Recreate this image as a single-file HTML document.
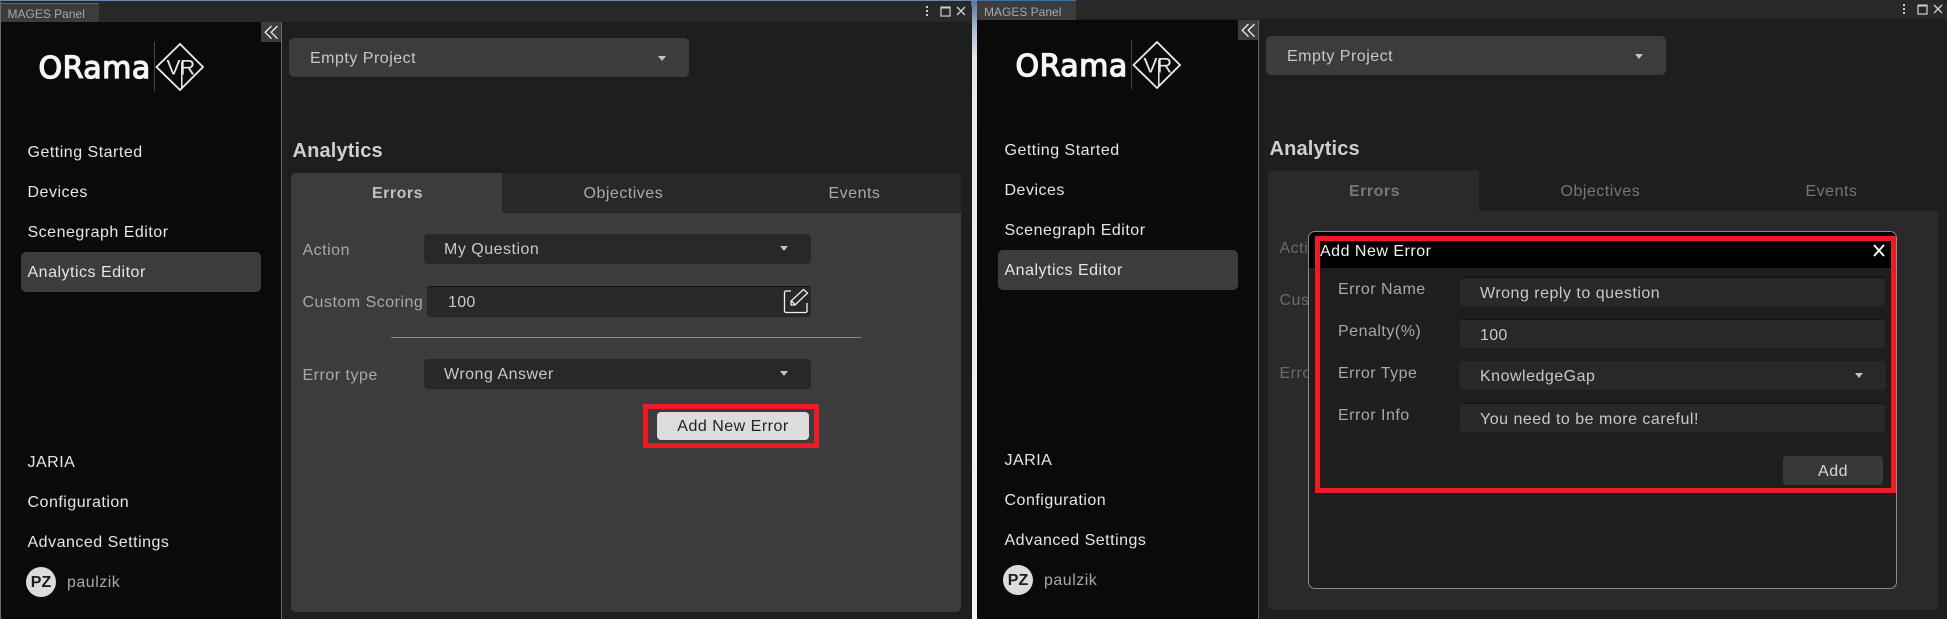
<!DOCTYPE html>
<html><head><meta charset="utf-8"><style>
html,body{margin:0;padding:0;background:#1e1e1e}
body{width:1947px;height:619px;overflow:hidden;position:relative;font-family:"Liberation Sans",sans-serif;font-size:16px;letter-spacing:.5px}
div,span{position:absolute;white-space:nowrap;box-sizing:border-box}
svg{position:absolute;overflow:visible}
.t{height:20px;line-height:20px;margin-top:1px}
.panel{top:0;height:619px;overflow:hidden;background:#1e1e1e}
.nav{color:#e6e6e6;left:27px;letter-spacing:.5px}
.lab{color:#a8a8a8}
.val{color:#c8c8c8}
.dd{background:#282828;border-radius:4px}
.inp{background:#282828;border-top:1px solid #111;border-radius:3px}
.arr{width:0;height:0;border-left:4px solid transparent;border-right:4px solid transparent;border-top:5px solid #c4c4c4}
.h{color:#cfcfcf;font-weight:700;font-size:20px;letter-spacing:.15px}
.tab{height:18px;line-height:18px;color:#a8a8a8;font-size:12px;letter-spacing:0}
.pz{width:30px;height:30px;border-radius:50%;background:#dcdcdc;color:#1c1c1c;font-weight:700;text-align:center;line-height:32px;letter-spacing:0}
</style></head><body>
<div style="left:971px;top:0;width:6px;height:619px;background:linear-gradient(#5a7299 0,#aebdd2 30px,#e8e8e8 60px,#f4f4f4 100%)"></div>
<div style="left:0;top:0;width:977px;height:1px;background:#6d86ac"></div>
<div style="left:0;top:0;width:1px;height:619px;background:#6a6a6a"></div>

<!-- PANEL 1 -->
<div class="panel" style="left:1px;width:971px;top:1px;height:618px;border-radius:0 7px 0 4px">
 <div style="left:0;top:-1px;width:971px;height:22px;background:#282828"></div>
 <div style="left:0;top:2px;width:98px;height:19px;background:#3c3c3c;border-top:1px solid #3a70b0"></div>
 <div class="tab" style="left:6.500px;top:4px">MAGES Panel</div>
 <svg style="left:-1px;top:-1px" width="972" height="22"><g fill="#d0d0d0"><rect x="926" y="6" width="2" height="2"/><rect x="926" y="10" width="2" height="2"/><rect x="926" y="14" width="2" height="2"/></g><rect x="941" y="7.500" width="9" height="8.500" fill="none" stroke="#d0d0d0" stroke-width="1.200"/><rect x="940.500" y="6.500" width="10" height="2" fill="#d0d0d0"/><path d="M957 7l8 8M965 7l-8 8" stroke="#d0d0d0" stroke-width="1.400" fill="none"/></svg>

 <div style="left:0;top:21px;width:280px;height:597px;background:#0a0a0a"></div>
 <div style="left:280px;top:21px;width:1px;height:597px;background:#6a6a6a"></div>
 <div style="left:260px;top:21px;width:20px;height:20px;background:#3c3c3c"></div>
 <svg style="left:-1px;top:-1px" width="300" height="100"><path d="M271.500 26l-6.300 6.300 6.300 6.400M277.500 26l-6.300 6.300 6.300 6.400" fill="none" stroke="#f0f0f0" stroke-width="1.300"/>
  <text x="38.500" y="78" font-family="DejaVu Sans" font-size="30" letter-spacing=".5" fill="#f6f6f6" stroke="#f6f6f6" stroke-width="1.300">ORama</text>
  <rect x="154" y="42" width="1" height="49" fill="#444"/>
  <path d="M180 44L203 67 180 90 156.500 67z" fill="none" stroke="#eee" stroke-width="1.800"/>
  <text x="166.500" y="74.500" font-family="Liberation Sans" font-size="21" fill="#e8e8e8">V</text>
  <text x="180" y="74.500" font-family="Liberation Sans" font-size="21" fill="#e8e8e8">R</text>
  <path d="M181.800 62v27" stroke="#e8e8e8" stroke-width="1.500"/>
 </svg>

 <div class="t nav" style="left:26.500px;top:141px">Getting Started</div>
 <div class="t nav" style="left:26.500px;top:181px">Devices</div>
 <div class="t nav" style="left:26.500px;top:221px">Scenegraph Editor</div>
 <div style="left:20px;top:251px;width:240px;height:40px;background:#3c3c3c;border-radius:5px"></div>
 <div class="t nav" style="left:26.500px;top:261px">Analytics Editor</div>
 <div class="t nav" style="left:26.500px;top:451px">JARIA</div>
 <div class="t nav" style="left:26.500px;top:491px">Configuration</div>
 <div class="t nav" style="left:26.500px;top:531px">Advanced Settings</div>
 <div class="pz" style="left:25px;top:566px">PZ</div>
 <div class="t lab" style="left:66px;top:571px">paulzik</div>

 <div style="left:288px;top:37px;width:400px;height:39px;background:#3c3c3c;border-radius:5px"></div>
 <div class="t val" style="left:309px;top:47px">Empty Project</div>
 <div class="arr" style="left:657px;top:55px"></div>

 <div class="t h" style="left:291.500px;top:139px">Analytics</div>

 <div style="left:290px;top:172px;width:670px;height:439px;background:#3c3c3c;border-radius:5px"></div>
 <div style="left:501px;top:172px;width:459px;height:40px;background:#282828;border-radius:0 5px 0 0"></div>
 <div class="t" style="left:371px;top:182px;color:#c0c0c0;font-weight:700">Errors</div>
 <div class="t lab" style="left:582.500px;top:182px">Objectives</div>
 <div class="t lab" style="left:827.500px;top:182px">Events</div>

 <div class="t lab" style="left:301.500px;top:239px">Action</div>
 <div class="dd" style="left:422.500px;top:233px;width:387.500px;height:30px"></div>
 <div class="t val" style="left:443px;top:238px">My Question</div>
 <div class="arr" style="left:779px;top:245px"></div>

 <div class="t lab" style="left:301.500px;top:291px">Custom Scoring</div>
 <div class="inp" style="left:426px;top:285px;width:384px;height:31px"></div>
 <div class="t val" style="left:447px;top:291px;letter-spacing:.3px">100</div>
 <svg style="left:-1px;top:-1px" width="900" height="330"><path d="M791 291h-5a1.500 1.500 0 0 0-1.500 1.500V311a1.500 1.500 0 0 0 1.500 1.500h19.500a1.500 1.500 0 0 0 1.500-1.500v-8" fill="none" stroke="#f0f0f0" stroke-width="1.300"/><path d="M791 305v-4L803.500 289.500 807.500 293 795 305zM791.500 301l3.500 3.500" fill="none" stroke="#f0f0f0" stroke-width="1.300"/></svg>

 <div style="left:390px;top:336px;width:470px;height:1px;background:#8a8a8a"></div>

 <div class="t lab" style="left:301.500px;top:364px">Error type</div>
 <div class="dd" style="left:422.500px;top:358px;width:387.500px;height:30px"></div>
 <div class="t val" style="left:443px;top:363px">Wrong Answer</div>
 <div class="arr" style="left:779px;top:370px"></div>

 <div style="left:642px;top:403px;width:176px;height:44px;border:5px solid #ed1c24"></div>
 <div style="left:656px;top:411px;width:152px;height:28px;background:#dcdcdc;border-radius:4px"></div>
 <div class="t" style="left:656px;width:152px;top:415px;text-align:center;color:#222">Add New Error</div>
</div>

<!-- PANEL 2 -->
<div class="panel" style="left:977px;width:970px;height:619px;border-radius:0 5px 0 4px">
 <div style="left:0;top:0;width:970px;height:19px;background:#282828"></div>
 <div style="left:0;top:0;width:99px;height:20px;background:#3c3c3c;border-top:1px solid #3a70b0"></div>
 <div class="tab" style="left:7px;top:3px">MAGES Panel</div>
 <svg style="left:0;top:0" width="970" height="22"><g fill="#d0d0d0"><rect x="926" y="4" width="2" height="2"/><rect x="926" y="8" width="2" height="2"/><rect x="926" y="12" width="2" height="2"/></g><rect x="941" y="5.500" width="9" height="8.500" fill="none" stroke="#d0d0d0" stroke-width="1.200"/><rect x="940.500" y="4.500" width="10" height="2" fill="#d0d0d0"/><path d="M957 5l8 8M965 5l-8 8" stroke="#d0d0d0" stroke-width="1.400" fill="none"/></svg>

 <div style="left:0;top:20px;width:281px;height:599px;background:#0a0a0a"></div>
 <div style="left:281px;top:20px;width:1px;height:599px;background:#6a6a6a"></div>
 <div style="left:261px;top:20px;width:20px;height:20px;background:#3c3c3c"></div>
 <svg style="left:0;top:-2px" width="300" height="100"><path d="M271.500 26l-6.300 6.300 6.300 6.400M277.500 26l-6.300 6.300 6.300 6.400" fill="none" stroke="#f0f0f0" stroke-width="1.300"/>
  <text x="38.500" y="78" font-family="DejaVu Sans" font-size="30" letter-spacing=".5" fill="#f6f6f6" stroke="#f6f6f6" stroke-width="1.300">ORama</text>
  <rect x="154" y="42" width="1" height="49" fill="#444"/>
  <path d="M180 44L203 67 180 90 156.500 67z" fill="none" stroke="#eee" stroke-width="1.800"/>
  <text x="166.500" y="74.500" font-family="Liberation Sans" font-size="21" fill="#e8e8e8">V</text>
  <text x="180" y="74.500" font-family="Liberation Sans" font-size="21" fill="#e8e8e8">R</text>
  <path d="M181.800 62v27" stroke="#e8e8e8" stroke-width="1.500"/>
 </svg>

 <div class="t nav" style="left:27.500px;top:140px">Getting Started</div>
 <div class="t nav" style="left:27.500px;top:180px">Devices</div>
 <div class="t nav" style="left:27.500px;top:220px">Scenegraph Editor</div>
 <div style="left:21px;top:250px;width:240px;height:40px;background:#3c3c3c;border-radius:5px"></div>
 <div class="t nav" style="left:27.500px;top:260px">Analytics Editor</div>
 <div class="t nav" style="left:27.500px;top:450px">JARIA</div>
 <div class="t nav" style="left:27.500px;top:490px">Configuration</div>
 <div class="t nav" style="left:27.500px;top:530px">Advanced Settings</div>
 <div class="pz" style="left:26px;top:565px">PZ</div>
 <div class="t lab" style="left:67px;top:570px">paulzik</div>

 <div style="left:289px;top:36px;width:400px;height:39px;background:#3c3c3c;border-radius:5px"></div>
 <div class="t val" style="left:310px;top:46px">Empty Project</div>
 <div class="arr" style="left:658px;top:54px"></div>

 <div class="t h" style="left:292.500px;top:138px">Analytics</div>

 <div style="left:291px;top:171px;width:670px;height:439px;background:#2a2a2a;border-radius:5px"></div>
 <div style="left:502px;top:171px;width:459px;height:40px;background:#1e1e1e"></div>
 <div class="t" style="left:372px;top:181px;color:#787878;font-weight:700">Errors</div>
 <div class="t" style="left:583.500px;top:181px;color:#777">Objectives</div>
 <div class="t" style="left:828.500px;top:181px;color:#777">Events</div>
 <div class="t" style="left:302.500px;top:238px;color:#6a6a6a">Action</div>
 <div class="t" style="left:302.500px;top:290px;color:#6a6a6a">Custom Scoring</div>
 <div class="t" style="left:302.500px;top:363px;color:#6a6a6a">Error type</div>

 <!-- modal -->
 <div style="left:331px;top:231px;width:589px;height:358px;background:#1e1e1e;border:1px solid #8c8c8c;border-radius:7px"></div>
 <div style="left:332px;top:232px;width:587px;height:36px;background:#000;border-radius:6px 6px 0 0"></div>
 <div style="left:338px;top:236px;width:581px;height:257px;border:5px solid #ed1c24"></div>
 <div class="t" style="left:343px;top:241px;color:#f0f0f0">Add New Error</div>
 <svg style="left:0;top:0" width="970" height="300"><path d="M897 245l10 11M907 245l-10 11" stroke="#fff" stroke-width="1.900" fill="none"/></svg>

 <div class="t lab" style="left:361px;top:279px">Error Name</div>
 <div class="inp" style="left:483px;top:277px;width:425px;height:29px"></div>
 <div class="t val" style="left:503px;top:283px">Wrong reply to question</div>

 <div class="t lab" style="left:361px;top:321px">Penalty(%)</div>
 <div class="inp" style="left:483px;top:319px;width:425px;height:29px"></div>
 <div class="t val" style="left:503px;top:325px;letter-spacing:.3px">100</div>

 <div class="t lab" style="left:361px;top:363px">Error Type</div>
 <div class="dd" style="left:482px;top:361px;width:427px;height:29px"></div>
 <div class="t val" style="left:503px;top:366px">KnowledgeGap</div>
 <div class="arr" style="left:878px;top:373px"></div>

 <div class="t lab" style="left:361px;top:405px">Error Info</div>
 <div class="inp" style="left:483px;top:403px;width:425px;height:29px"></div>
 <div class="t val" style="left:503px;top:409px">You need to be more careful!</div>

 <div style="left:806px;top:456px;width:100px;height:29px;background:#383838;border-radius:4px"></div>
 <div class="t" style="left:806px;width:100px;top:461px;text-align:center;color:#d8d8d8">Add</div>
</div>
</body></html>
